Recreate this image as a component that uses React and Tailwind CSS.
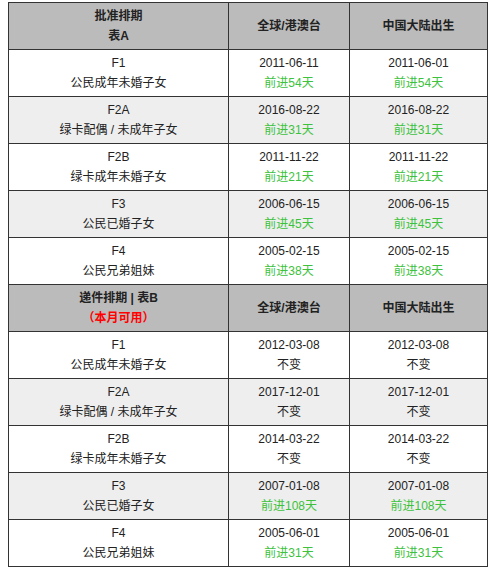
import React from 'react'

const tableA = [
  { code: 'F1', name: '公民成年未婚子女', a: '2011-06-11', b: '2011-06-01', ca: '前进54天', cb: '前进54天' },
  { code: 'F2A', name: '绿卡配偶 / 未成年子女', a: '2016-08-22', b: '2016-08-22', ca: '前进31天', cb: '前进31天' },
  { code: 'F2B', name: '绿卡成年未婚子女', a: '2011-11-22', b: '2011-11-22', ca: '前进21天', cb: '前进21天' },
  { code: 'F3', name: '公民已婚子女', a: '2006-06-15', b: '2006-06-15', ca: '前进45天', cb: '前进45天' },
  { code: 'F4', name: '公民兄弟姐妹', a: '2005-02-15', b: '2005-02-15', ca: '前进38天', cb: '前进38天' },
]

const tableB = [
  { code: 'F1', name: '公民成年未婚子女', a: '2012-03-08', b: '2012-03-08', ca: '不变', cb: '不变' },
  { code: 'F2A', name: '绿卡配偶 / 未成年子女', a: '2017-12-01', b: '2017-12-01', ca: '不变', cb: '不变' },
  { code: 'F2B', name: '绿卡成年未婚子女', a: '2014-03-22', b: '2014-03-22', ca: '不变', cb: '不变' },
  { code: 'F3', name: '公民已婚子女', a: '2007-01-08', b: '2007-01-08', ca: '前进108天', cb: '前进108天' },
  { code: 'F4', name: '公民兄弟姐妹', a: '2005-06-01', b: '2005-06-01', ca: '前进31天', cb: '前进31天' },
]

const cell = 'border border-[#333] px-1 py-[3px] text-center align-middle'

function Change({ text }) {
  if (text === '不变') return <div>{text}</div>
  return <div className="text-[#3cc23c]">{text}</div>
}

function Rows({ rows }) {
  return rows.map((r, i) => (
    <tr key={r.code} className={i % 2 === 1 ? 'bg-[#eeeeee]' : 'bg-white'}>
      <td className={cell}>
        <div>{r.code}</div>
        <div>{r.name}</div>
      </td>
      <td className={cell}>
        <div>{r.a}</div>
        <Change text={r.ca} />
      </td>
      <td className={cell}>
        <div>{r.b}</div>
        <Change text={r.cb} />
      </td>
    </tr>
  ))
}

function Head({ children }) {
  return (
    <tr className="bg-[#bbbbbb] font-bold">
      <td className={cell}>{children}</td>
      <td className={cell}>全球/港澳台</td>
      <td className={cell}>中国大陆出生</td>
    </tr>
  )
}

export default function App() {
  return (
    <div
      className="w-[494px] h-[573px] bg-white pt-[2px] pl-2 text-[12px] leading-[20px] text-[#222]"
      style={{ fontFamily: '"Liberation Sans", "Noto Sans CJK SC", sans-serif' }}
    >
      <table className="border-collapse table-fixed w-[479px]">
        <colgroup>
          <col className="w-[220px]" />
          <col className="w-[121px]" />
          <col className="w-[138px]" />
        </colgroup>
        <tbody>
          <Head>
            <div>批准排期</div>
            <div>表A</div>
          </Head>
          <Rows rows={tableA} />
          <Head>
            <div>递件排期 | 表B</div>
            <div className="text-[#ff0000]">（本月可用）</div>
          </Head>
          <Rows rows={tableB} />
        </tbody>
      </table>
    </div>
  )
}
